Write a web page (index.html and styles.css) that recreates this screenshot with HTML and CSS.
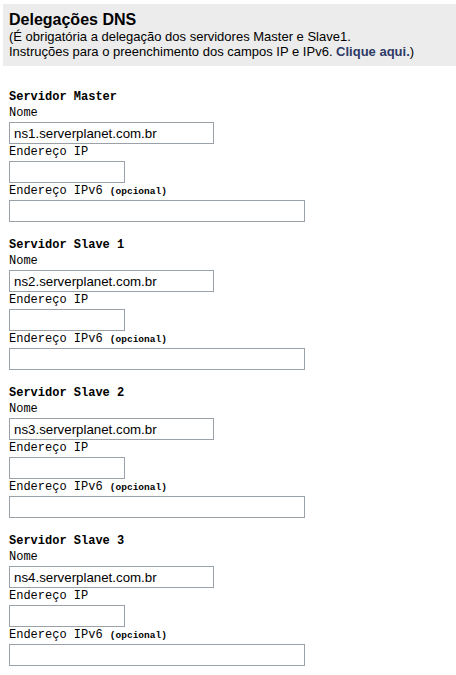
FILE: index.html
```html
<!DOCTYPE html>
<html lang="pt-BR">
<head>
<meta charset="utf-8">
<title>Delegações DNS</title>
<link rel="stylesheet" href="styles.css">
</head>
<body>
<div class="header">
  <div class="title">Delegações DNS</div>
  <div class="note">(É obrigatória a delegação dos servidores Master e Slave1.</div>
  <div class="note">Instruções para o preenchimento dos campos IP e IPv6. <a class="link" href="#">Clique aqui.</a>)</div>
</div>
<form class="form">
  <div class="server">
    <div class="heading">Servidor Master</div>
    <label class="label">Nome</label>
    <input class="field field-name" type="text" value="ns1.serverplanet.com.br">
    <label class="label">Endereço IP</label>
    <input class="field field-ip" type="text">
    <label class="label">Endereço IPv6 <span class="opt">(opcional)</span></label>
    <input class="field field-ipv6" type="text">
  </div>
  <div class="server">
    <div class="heading">Servidor Slave 1</div>
    <label class="label">Nome</label>
    <input class="field field-name" type="text" value="ns2.serverplanet.com.br">
    <label class="label">Endereço IP</label>
    <input class="field field-ip" type="text">
    <label class="label">Endereço IPv6 <span class="opt">(opcional)</span></label>
    <input class="field field-ipv6" type="text">
  </div>
  <div class="server">
    <div class="heading">Servidor Slave 2</div>
    <label class="label">Nome</label>
    <input class="field field-name" type="text" value="ns3.serverplanet.com.br">
    <label class="label">Endereço IP</label>
    <input class="field field-ip" type="text">
    <label class="label">Endereço IPv6 <span class="opt">(opcional)</span></label>
    <input class="field field-ipv6" type="text">
  </div>
  <div class="server">
    <div class="heading">Servidor Slave 3</div>
    <label class="label">Nome</label>
    <input class="field field-name" type="text" value="ns4.serverplanet.com.br">
    <label class="label">Endereço IP</label>
    <input class="field field-ip" type="text">
    <label class="label">Endereço IPv6 <span class="opt">(opcional)</span></label>
    <input class="field field-ipv6" type="text">
  </div>
</form>
</body>
</html>
```
FILE: styles.css
```css
html, body {
  margin: 0;
  padding: 0;
  background: #ffffff;
}
body {
  font-family: "Liberation Sans", Arial, sans-serif;
  color: #000;
}
.header {
  margin: 4px 0 0 3px;
  padding: 7px 6px 7px 6px;
  background: #ececec;
}
.title {
  font-size: 16px;
  font-weight: bold;
  line-height: 18px;
}
.note {
  font-size: 13px;
  line-height: 15px;
}
.link {
  color: #2e3a66;
  font-weight: bold;
  text-decoration: none;
}
.form {
  margin: 23px 0 0 9px;
  display: flex;
  flex-direction: column;
  gap: 15px;
}
.server {
  display: flex;
  flex-direction: column;
  align-items: flex-start;
}
.heading {
  font-family: "Liberation Mono", "Courier New", monospace;
  font-size: 12px;
  font-weight: bold;
  line-height: 16px;
}
.label {
  display: block;
  font-family: "Liberation Mono", "Courier New", monospace;
  font-size: 12px;
  line-height: 17px;
}
.opt {
  font-size: 9.5px;
  font-weight: bold;
}
.field {
  display: block;
  box-sizing: border-box;
  height: 22px;
  margin: 0;
  padding: 0 4px;
  border: 1px solid #9aa1a8;
  background: #fff;
  font-family: "Liberation Sans", Arial, sans-serif;
  font-size: 13.3px;
  color: #000;
  outline: none;
}
.field-name { width: 205px; }
.field-ip { width: 116px; }
.field-ipv6 { width: 296px; }
```
